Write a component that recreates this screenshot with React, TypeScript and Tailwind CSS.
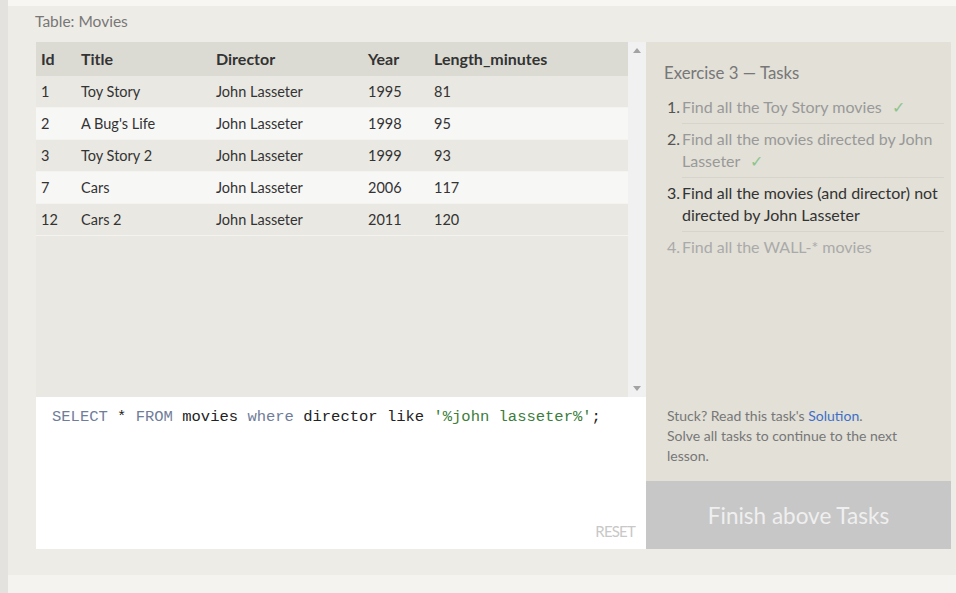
import React from 'react';

const ROWS = [
  { id: 1, title: 'Toy Story', director: 'John Lasseter', year: 1995, length: 81 },
  { id: 2, title: "A Bug's Life", director: 'John Lasseter', year: 1998, length: 95 },
  { id: 3, title: 'Toy Story 2', director: 'John Lasseter', year: 1999, length: 93 },
  { id: 7, title: 'Cars', director: 'John Lasseter', year: 2006, length: 117 },
  { id: 12, title: 'Cars 2', director: 'John Lasseter', year: 2011, length: 120 },
];

const FONT = "font-['Segoe_UI','Lato','Noto_Sans',sans-serif]";

function Check() {
  return <span className="ml-[10px] text-[#8cc58c]">✓</span>;
}

export default function App() {
  return (
    <div className={`flex h-[593px] w-[956px] bg-[#f4f3ef] ${FONT}`}>
      <div className="w-[8px] bg-[#e3e2de]" />
      <div className="flex flex-1 flex-col">
        <div className="h-[6px] bg-[#f7f6f3]" />
        <div className="h-[569px] bg-[#eeece6] pl-[28px] pr-[5px]">
          <div className="-ml-[1px] h-[36px] pt-[5px] text-[15.5px] leading-[20px] text-[#777]">Table: Movies</div>

          <div className="flex">
            {/* left: results + editor */}
            <div className="flex w-[610px] flex-col">
              <div className="flex h-[355px]">
                <div className="w-[592px] bg-[#e9e8e2] text-[14.5px] text-[#333]">
                  <div className="flex h-[34px] items-center bg-[#dcdbd3] text-[16px] font-bold text-[#333]">
                    <div className="w-[45px] pl-[5px]">Id</div>
                    <div className="w-[135px]">Title</div>
                    <div className="w-[152px]">Director</div>
                    <div className="w-[66px]">Year</div>
                    <div>Length_minutes</div>
                  </div>
                  {ROWS.map((r, i) => (
                    <div
                      key={r.id}
                      className={`flex h-[32px] items-center border-b border-[#f4f3f0] ${i % 2 ? 'bg-[#f7f7f6]' : 'bg-[#e9e8e2]'}`}
                    >
                      <div className="w-[45px] pl-[5px]">{r.id}</div>
                      <div className="w-[135px]">{r.title}</div>
                      <div className="w-[152px]">{r.director}</div>
                      <div className="w-[66px]">{r.year}</div>
                      <div>{r.length}</div>
                    </div>
                  ))}
                </div>
                {/* scrollbar */}
                <div className="flex w-[18px] flex-col items-center justify-between bg-[#f1f1f1] py-[6px]">
                  <svg width="8" height="5" viewBox="0 0 8 5"><path d="M0 5 L4 0 L8 5 Z" fill="#a3a3a3" /></svg>
                  <svg width="8" height="5" viewBox="0 0 8 5"><path d="M0 0 L4 5 L8 0 Z" fill="#a3a3a3" /></svg>
                </div>
              </div>
              <div className="relative h-[152px] bg-white px-[16px] pt-[8px] font-['Liberation_Mono',monospace] text-[15.5px] leading-[24px] text-[#222]">
                <span className="text-[#6f7d99]">SELECT</span> * <span className="text-[#6f7d99]">FROM</span> movies{' '}
                <span className="text-[#6f7d99]">where</span> director like{' '}
                <span className="text-[#3b7d3b]">'%john lasseter%'</span>;
                <div className={`absolute bottom-[6px] right-[11px] text-[15px] tracking-[-0.8px] text-[#c8c8c8] ${FONT}`}>RESET</div>
              </div>
            </div>

            {/* right: tasks */}
            <div className="flex w-[305px] flex-col bg-[#e2e0d7]">
              <div className="flex-1 pl-[18px] pr-[7px] pt-[19px]">
                <div className="text-[16.8px] leading-[24px] text-[#777]">Exercise 3 — Tasks</div>
                <ol className="mt-[11px] pl-[3px] text-[16px] leading-[22px]">
                  <li className="flex pb-[4px]">
                    <span className="w-[15px] text-[#555]">1.</span>
                    <span className="flex-1 border-b border-[#d6d4cb] pb-[5px] text-[#999]">Find all the Toy Story movies<Check /></span>
                  </li>
                  <li className="flex pb-[4px]">
                    <span className="w-[15px] text-[#555]">2.</span>
                    <span className="flex-1 border-b border-[#d6d4cb] pb-[5px] text-[#999]">Find all the movies directed by John Lasseter<Check /></span>
                  </li>
                  <li className="flex pb-[4px]">
                    <span className="w-[15px] text-[#333]">3.</span>
                    <span className="flex-1 border-b border-[#d6d4cb] pb-[5px] text-[#333]">Find all the movies (and director) not directed by John Lasseter</span>
                  </li>
                  <li className="flex">
                    <span className="w-[15px] text-[#aaa]">4.</span>
                    <span className="flex-1 text-[#aaa]">Find all the WALL-* movies</span>
                  </li>
                </ol>
              </div>
              <div className="pb-[15px] pl-[21px] pr-[30px] text-[14px] leading-[20px] text-[#777]">
                Stuck? Read this task's <span className="text-[#3d6fc7]">Solution</span>.
                <br />
                Solve all tasks to continue to the next lesson.
              </div>
              <div className="flex h-[68px] items-center justify-center bg-[#c7c7c7] pt-[2px] text-[22.5px] text-[#efefef]">
                Finish above Tasks
              </div>
            </div>
          </div>
        </div>
        <div className="flex-1 bg-[#f4f3ef]" />
      </div>
    </div>
  );
}
